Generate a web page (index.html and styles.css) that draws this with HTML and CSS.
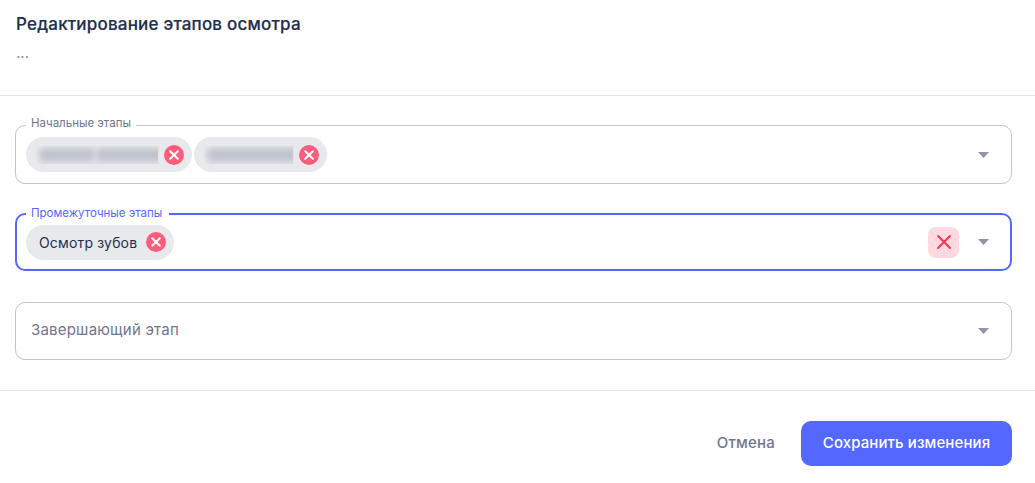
FILE: index.html
```html
<!DOCTYPE html>
<html lang="ru">
<head>
<meta charset="utf-8">
<title>Редактирование этапов осмотра</title>
<link rel="stylesheet" href="styles.css">
</head>
<body>
<div class="dialog">
  <header class="head">
    <h1 class="title">Редактирование этапов осмотра</h1>
    <p class="sub">...</p>
  </header>
  <main class="body">
    <div class="field">
      <span class="label">Начальные этапы</span>
      <div class="chips">
        <div class="chip chip-blur">
          <span class="blur-box blur-a"><i class="blur-bar bar-a1"></i><i class="blur-bar bar-a2"></i></span>
          <svg class="chip-x" viewBox="0 0 20 20"><circle cx="10" cy="10" r="10" fill="#ff5c7c"/><path d="M6.2 6.2l7.6 7.6M13.8 6.2l-7.6 7.6" stroke="#fff" stroke-width="2" stroke-linecap="round"/></svg>
        </div>
        <div class="chip chip-blur">
          <span class="blur-box blur-b"><i class="blur-bar bar-b1"></i></span>
          <svg class="chip-x" viewBox="0 0 20 20"><circle cx="10" cy="10" r="10" fill="#ff5c7c"/><path d="M6.2 6.2l7.6 7.6M13.8 6.2l-7.6 7.6" stroke="#fff" stroke-width="2" stroke-linecap="round"/></svg>
        </div>
      </div>
      <svg class="caret" viewBox="0 0 11 6"><path d="M0 0h11L5.5 6z" fill="#8f95a6"/></svg>
    </div>
    <div class="field field-active">
      <span class="label label-active">Промежуточные этапы</span>
      <div class="chips">
        <div class="chip chip-text">
          <span>Осмотр зубов</span>
          <svg class="chip-x" viewBox="0 0 20 20"><circle cx="10" cy="10" r="10" fill="#ff5c7c"/><path d="M6.2 6.2l7.6 7.6M13.8 6.2l-7.6 7.6" stroke="#fff" stroke-width="2" stroke-linecap="round"/></svg>
        </div>
      </div>
      <button class="clear" type="button" aria-label="Очистить">
        <svg viewBox="0 0 14 14" width="14" height="14"><path d="M1 1l12 12M13 1L1 13" stroke="#ff2d55" stroke-width="1.8" stroke-linecap="round"/></svg>
      </button>
      <svg class="caret" viewBox="0 0 11 6"><path d="M0 0h11L5.5 6z" fill="#8f95a6"/></svg>
    </div>
    <div class="field">
      <span class="placeholder">Завершающий этап</span>
      <svg class="caret" viewBox="0 0 11 6"><path d="M0 0h11L5.5 6z" fill="#8f95a6"/></svg>
    </div>
  </main>
  <footer class="foot">
    <button class="cancel" type="button">Отмена</button>
    <button class="save" type="button">Сохранить изменения</button>
  </footer>
</div>
</body>
</html>
```
FILE: styles.css
```css
* { box-sizing: border-box; }
html, body { margin: 0; background: #fff; }
body { font-family: Inter, "Liberation Sans", sans-serif; color: #1f2f4f; overflow: hidden; }
.dialog { width: 1035px; height: 483px; display: flex; flex-direction: column; }
.head { height: 96px; padding: 14px 16px 0; border-bottom: 1px solid #e3e4e8; }
.title { margin: 0; font-size: 17px; line-height: 20px; font-weight: 500; letter-spacing: 0.2px; color: #1f2f4f; -webkit-text-stroke: 0.2px #1f2f4f; }
.sub { margin: 9px 0 0; font-size: 15px; line-height: 20px; color: #8a90a3; }
.body { padding: 29px 23px 0 15px; display: flex; flex-direction: column; height: 295px; border-bottom: 1px solid #e3e4e8; gap: 30px; }
.field { position: relative; height: 59px; flex: none; display: flex; align-items: center; padding: 0 21px 0 10px; border: 1px solid #c4c5ca; border-radius: 10px; }
.field-active { height: 58px; margin-top: -1px; border: 2px solid #5468ff; padding: 0 20px 0 9px; }
.field:nth-child(3) { height: 58px; margin-top: 1px; }
.label { position: absolute; left: 10px; top: -10px; padding: 0 5px; background: #fff; font-size: 11.5px; line-height: 14px; color: #6f7690; }
.field-active .label { left: 9px; top: -9px; }
.label-active { color: #5468ff; padding: 0 7px 0 5px; }
.chips { display: flex; gap: 2px; flex: 1; }
.chip { height: 35px; border-radius: 18px; background: #e8e9ed; display: flex; align-items: center; }
.chip-text { padding: 0 8px 0 13px; gap: 9px; font-size: 14px; letter-spacing: 0.16px; color: #1f2f4f; }
.chip-blur { padding: 0 8px 0 10px; gap: 5px; }
.chip-x { width: 20px; height: 20px; flex: none; }
.blur-box { display: block; height: 18px; overflow: hidden; position: relative; background: #e8e9ed; border-right: 1px solid #efdde2; }
.blur-a { width: 123px; }
.blur-b { width: 90px; }
.blur-bar { position: absolute; top: 2px; height: 14px; border-radius: 5px; background: #bfc3cd; filter: blur(3px); }
.bar-a1 { left: 3px; width: 56px; }
.bar-a2 { left: 60px; width: 70px; }
.bar-b1 { left: 3px; width: 92px; }
.clear { width: 31px; height: 31px; border: 0; border-radius: 8px; background: #ffd9df; padding: 0; display: flex; align-items: center; justify-content: center; margin-right: 19px; }
.caret { width: 11px; height: 6px; flex: none; margin-right: 1px; }
.placeholder { flex: 1; padding-left: 5px; font-size: 15px; line-height: 20px; letter-spacing: 0.2px; color: #6f7690; position: relative; top: -1px; }
.foot { display: flex; justify-content: flex-end; align-items: center; gap: 26px; padding: 30px 23px 0 0; }
.cancel { border: 0; background: none; padding: 0 0 2px; font: 500 15px/20px Inter, "Liberation Sans", sans-serif; letter-spacing: 0.2px; color: #6f7690; }
.save { width: 211px; height: 45px; border: 0; border-radius: 10px; background: #5468ff; color: #fff; padding: 0 0 2px; font: 500 15px/20px Inter, "Liberation Sans", sans-serif; letter-spacing: 0.1px; }
```
